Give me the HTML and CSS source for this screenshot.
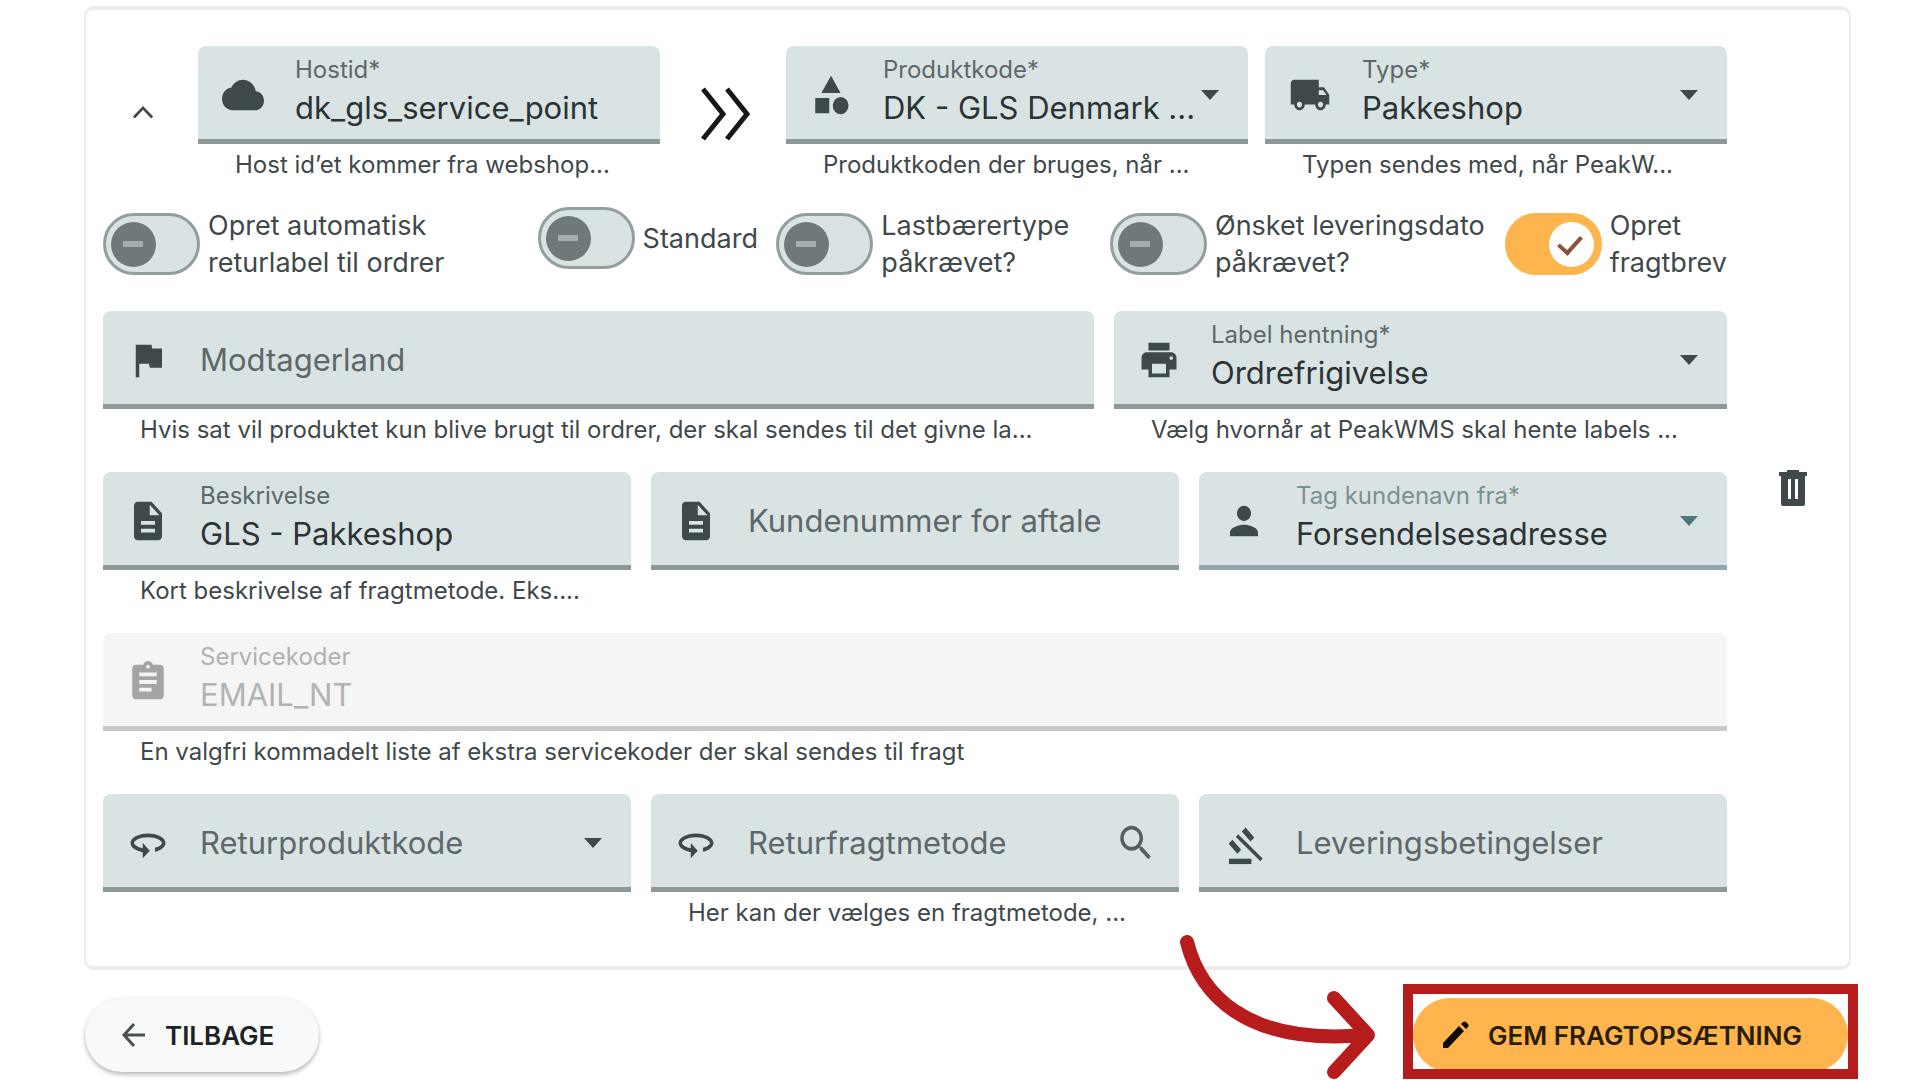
FILE: index.html
```html
<!DOCTYPE html>
<html lang="da">
<head>
<meta charset="utf-8">
<meta name="viewport" content="width=device-width, initial-scale=1">
<title>Fragtopsætning</title>
<link rel="stylesheet" href="styles.css">
</head>
<body>
<svg class="sprite" aria-hidden="true">
  <symbol id="i-cloud" viewBox="0 0 24 24" preserveAspectRatio="none"><path d="M19.35 10.04C18.67 6.59 15.64 4 12 4 9.11 4 6.6 5.64 5.35 8.04 2.34 8.36 0 10.91 0 14c0 3.31 2.69 6 6 6h13c2.76 0 5-2.24 5-5 0-2.64-2.05-4.78-4.65-4.96z"/></symbol>
  <symbol id="i-category" viewBox="0 0 24 24" preserveAspectRatio="none"><path d="M12 2l-5.500 9h11zM3 13.500h8v8H3z"/><circle cx="17.500" cy="17.500" r="4.500"/></symbol>
  <symbol id="i-truck" viewBox="0 0 24 24" preserveAspectRatio="none"><path d="M20 8h-3V4H3c-1.100 0-2 .9-2 2v11h2c0 1.660 1.340 3 3 3s3-1.340 3-3h6c0 1.660 1.340 3 3 3s3-1.340 3-3h2v-5l-3-4zM6 18.500c-.83 0-1.500-.67-1.500-1.500s.67-1.500 1.500-1.500 1.500.67 1.500 1.500-.67 1.500-1.500 1.500zm13.500-9l1.960 2.500H17V9.500h2.500zm-1.500 9c-.83 0-1.500-.67-1.500-1.500s.67-1.500 1.500-1.500 1.500.67 1.500 1.500-.67 1.500-1.500 1.500z"/></symbol>
  <symbol id="i-flag" viewBox="0 0 24 24" preserveAspectRatio="none"><path d="M14.400 6L14 4H5v17h2v-7h5.600l.4 2h7V6z"/></symbol>
  <symbol id="i-print" viewBox="0 0 24 24" preserveAspectRatio="none"><path d="M19 8H5c-1.660 0-3 1.340-3 3v6h4v4h12v-4h4v-6c0-1.660-1.340-3-3-3zm-3 11H8v-5h8v5zm3-7c-.55 0-1-.45-1-1s.45-1 1-1 1 .45 1 1-.45 1-1 1zm-1-9H6v4h12V3z"/></symbol>
  <symbol id="i-doc" viewBox="0 0 24 24" preserveAspectRatio="none"><path d="M14 2H6c-1.100 0-1.990.9-1.990 2L4 20c0 1.100.89 2 1.990 2H18c1.100 0 2-.9 2-2V8l-6-6zm2 16H8v-2h8v2zm0-4H8v-2h8v2zm-3-5V3.500L18.500 9H13z"/></symbol>
  <symbol id="i-person" viewBox="0 0 24 24" preserveAspectRatio="none"><path d="M12 12c2.210 0 4-1.790 4-4s-1.790-4-4-4-4 1.790-4 4 1.790 4 4 4zm0 2c-2.670 0-8 1.340-8 4v2h16v-2c0-2.660-5.330-4-8-4z"/></symbol>
  <symbol id="i-assignment" viewBox="0 0 24 24" preserveAspectRatio="none"><path d="M19 3h-4.180C14.400 1.840 13.300 1 12 1c-1.300 0-2.400.84-2.820 2H5c-1.100 0-2 .9-2 2v14c0 1.100.9 2 2 2h14c1.100 0 2-.9 2-2V5c0-1.100-.9-2-2-2zm-7 0c.55 0 1 .45 1 1s-.45 1-1 1-1-.45-1-1 .45-1 1-1zm2 14H7v-2h7v2zm3-4H7v-2h10v2zm0-4H7V7h10v2z"/></symbol>
  <symbol id="i-return" viewBox="0 0 24 24" preserveAspectRatio="none"><path d="M12 7C6.480 7 2 9.240 2 12c0 2.240 2.940 4.130 7 4.770V20l4-4-4-4v2.730c-3.150-.56-5-1.900-5-2.730 0-1.060 3.040-3 8-3s8 1.940 8 3c0 .73-1.460 1.890-4 2.530v2.050c3.530-.77 6-2.530 6-4.580 0-2.760-4.480-5-10-5z"/></symbol>
  <symbol id="i-search" viewBox="0 0 24 24" preserveAspectRatio="none"><path d="M15.500 14h-.79l-.28-.27C15.410 12.590 16 11.110 16 9.500 16 5.910 13.090 3 9.500 3S3 5.910 3 9.500 5.910 16 9.500 16c1.610 0 3.090-.59 4.230-1.570l.27.28v.79l5 4.990L20.490 19l-4.990-5zm-6 0C7.010 14 5 11.990 5 9.500S7.010 5 9.500 5 14 7.010 14 9.500 11.990 14 9.500 14z"/></symbol>
  <symbol id="i-gavel" viewBox="0 0 24 24" preserveAspectRatio="none"><path d="M3.400 20.200h12.800v2.800H3.400z"/><path fill="none" stroke="currentColor" stroke-width="3" d="M11.800 5l5 5.200M4.300 11.400l5 5.200"/><path fill="none" stroke="currentColor" stroke-width="1.900" d="M8 8.200l14 12.600"/></symbol>
  <symbol id="i-caret" viewBox="0 0 20 12" preserveAspectRatio="none"><path d="M1 1h18l-9 10z"/></symbol>
</svg>

<main>
<form class="page">
  <section class="card">
    <div class="rows">

      <div class="row row-host">
        <button type="button" class="collapse" aria-label="Skjul"><svg width="22" height="15" viewBox="0 0 24 16"><path d="M2 13.500L12 3l10 10.500"/></svg></button>
        <div class="cell">
          <div class="field">
            <svg class="icon"><use href="#i-cloud"/></svg>
            <label class="label" for="hostid">Hostid*</label>
            <input class="value" id="hostid" type="text" value="dk_gls_service_point">
          </div>
          <p class="hint">Host id’et kommer fra webshop...</p>
        </div>
        <svg class="arrows" width="50" height="56" viewBox="0 0 50 56"><path d="M3 3l20 25L3 53M27 3l20 25-20 25"/></svg>
        <div class="cell">
          <div class="field">
            <svg class="icon"><use href="#i-category"/></svg>
            <label class="label" for="produktkode">Produktkode*</label>
            <select class="value" id="produktkode"><option>DK - GLS Denmark ...</option></select>
            <svg class="caret"><use href="#i-caret"/></svg>
          </div>
          <p class="hint">Produktkoden der bruges, når ...</p>
        </div>
        <div class="cell cell-last">
          <div class="field">
            <svg class="icon"><use href="#i-truck"/></svg>
            <label class="label" for="type">Type*</label>
            <select class="value" id="type"><option>Pakkeshop</option></select>
            <svg class="caret"><use href="#i-caret"/></svg>
          </div>
          <p class="hint">Typen sendes med, når PeakW...</p>
        </div>
      </div>

      <div class="row row-toggles">
        <label class="toggle"><input type="checkbox" class="switch"><span>Opret automatisk<br>returlabel til ordrer</span></label>
        <label class="toggle"><input type="checkbox" class="switch"><span>Standard</span></label>
        <label class="toggle"><input type="checkbox" class="switch"><span>Lastbærertype<br>påkrævet?</span></label>
        <label class="toggle"><input type="checkbox" class="switch"><span>Ønsket leveringsdato<br>påkrævet?</span></label>
        <label class="toggle"><input type="checkbox" class="switch" checked><span>Opret<br>fragtbrev</span></label>
      </div>

      <div class="row row-country">
        <div class="cell">
          <div class="field empty">
            <svg class="icon"><use href="#i-flag"/></svg>
            <label class="label" for="land">Modtagerland</label>
            <input class="value" id="land" type="text">
          </div>
          <p class="hint">Hvis sat vil produktet kun blive brugt til ordrer, der skal sendes til det givne la...</p>
        </div>
        <div class="cell">
          <div class="field">
            <svg class="icon"><use href="#i-print"/></svg>
            <label class="label" for="hentning">Label hentning*</label>
            <select class="value" id="hentning"><option>Ordrefrigivelse</option></select>
            <svg class="caret"><use href="#i-caret"/></svg>
          </div>
          <p class="hint">Vælg hvornår at PeakWMS skal hente labels ...</p>
        </div>
      </div>

      <div class="row row-thirds">
        <div class="cell">
          <div class="field">
            <svg class="icon"><use href="#i-doc"/></svg>
            <label class="label" for="beskrivelse">Beskrivelse</label>
            <input class="value" id="beskrivelse" type="text" value="GLS - Pakkeshop">
          </div>
          <p class="hint">Kort beskrivelse af fragtmetode. Eks....</p>
        </div>
        <div class="cell">
          <div class="field empty">
            <svg class="icon"><use href="#i-doc"/></svg>
            <label class="label" for="kundenummer">Kundenummer for aftale</label>
            <input class="value" id="kundenummer" type="text">
          </div>
        </div>
        <div class="cell">
          <div class="field active">
            <svg class="icon"><use href="#i-person"/></svg>
            <label class="label" for="kundenavn">Tag kundenavn fra*</label>
            <select class="value" id="kundenavn"><option>Forsendelsesadresse</option></select>
            <svg class="caret"><use href="#i-caret"/></svg>
          </div>
        </div>
      </div>

      <div class="row">
        <div class="cell">
          <div class="field disabled">
            <svg class="icon"><use href="#i-assignment"/></svg>
            <label class="label" for="servicekoder">Servicekoder</label>
            <input class="value" id="servicekoder" type="text" value="EMAIL_NT" disabled>
          </div>
          <p class="hint">En valgfri kommadelt liste af ekstra servicekoder der skal sendes til fragt</p>
        </div>
      </div>

      <div class="row row-thirds">
        <div class="cell">
          <div class="field empty">
            <svg class="icon"><use href="#i-return"/></svg>
            <label class="label" for="returkode">Returproduktkode</label>
            <select class="value" id="returkode"><option></option></select>
            <svg class="caret"><use href="#i-caret"/></svg>
          </div>
        </div>
        <div class="cell">
          <div class="field empty has-search">
            <svg class="icon"><use href="#i-return"/></svg>
            <label class="label" for="returmetode">Returfragtmetode</label>
            <input class="value" id="returmetode" type="text">
            <svg class="icon search"><use href="#i-search"/></svg>
          </div>
          <p class="hint">Her kan der vælges en fragtmetode, ...</p>
        </div>
        <div class="cell">
          <div class="field empty">
            <svg class="icon"><use href="#i-gavel"/></svg>
            <label class="label" for="betingelser">Leveringsbetingelser</label>
            <input class="value" id="betingelser" type="text">
          </div>
        </div>
      </div>
    </div>

    <button type="button" class="delete" aria-label="Slet">
      <svg width="28" height="36" viewBox="0 0 28 36"><path fill-rule="evenodd" d="M8 0h12v2h8v4h-2v28q0 2-2 2H4q-2 0-2-2V6H0V2h8zM9 9v20h3V9zM16 9v20h3V9z"/></svg>
    </button>
  </section>

  <footer class="actions">
    <button type="button" class="btn back">
      <svg width="24" height="24" viewBox="0 0 24 24"><path fill="none" stroke="currentColor" stroke-width="3" d="M12 1L2 12l10 11M2 12h21"/></svg>
      TILBAGE
    </button>
    <div class="highlight">
      <button type="submit" class="btn save">
        <svg width="28" height="28" viewBox="0 0 28 28"><path d="M1 27v-5L17 5l5 5L6 27zM19 3l2-2q1.500-1 3 0l2 2q1.500 1.500 0 3l-2 2z"/></svg>
        GEM FRAGTOPSÆTNING
      </button>
      <svg class="pointer" width="200" height="146" viewBox="0 0 200 146" aria-hidden="true"><path d="M10 9C22 57 64 113 188 102M157 65l34 37-34 37"/></svg>
    </div>
  </footer>
</form>
</main>
</body>
</html>
```
FILE: styles.css
```css
* { box-sizing: border-box; }

body {
  margin: 0;
  background: #fff;
  color: #3f484a;
  font-family: Inter, "Liberation Sans", sans-serif;
}

button, input, select {
  font: inherit;
  color: inherit;
  margin: 0;
  padding: 0;
  border: 0;
  background: none;
}

button { cursor: pointer; }

svg { display: block; fill: currentColor; }

.sprite { width: 0; height: 0; position: absolute; }

.page { padding: 6px 69px 8px 84px; }

/* Card */
.card {
  display: grid;
  grid-template-columns: minmax(0, 1fr) 122px;
  border: solid #ececec;
  border-width: 4px 2px;
  border-radius: 10px;
  padding: 36px 0 31px 17px;
}

.rows { display: grid; gap: 20px; }

.row { display: grid; gap: 20px; }

.row-host {
  grid-template-columns: 95px minmax(0, 1fr) 126px minmax(0, 1fr) 17px minmax(0, 1fr);
  gap: 0;
}

.cell-last { grid-column: 6; }

.row-country { grid-template-columns: minmax(0, 991fr) minmax(0, 613fr); }

.row-thirds { grid-template-columns: repeat(3, minmax(0, 1fr)); }

.row-toggles {
  grid-template-columns: 435fr 239fr 334fr 395fr 221fr;
  gap: 0;
  align-items: start;
  padding-bottom: 10px;
}

.collapse, .arrows { place-self: center; }

.collapse { padding: 0 16px 8px 0; }

.collapse path, .arrows path { fill: none; stroke: currentColor; stroke-width: 3; }

.arrows { color: #15181a; margin: 0 0 6px 4px; }

.arrows path { stroke-width: 5; }

/* Filled form fields */
.cell { min-height: 141px; }

.field {
  display: grid;
  grid-template-columns: 42px minmax(0, 1fr) auto;
  grid-template-rows: 26px 50px;
  column-gap: 31px;
  align-content: start;
  height: 98px;
  padding: 11px 28px 0 24px;
  background: #d9e3e3;
  border-bottom: 5px solid #8d9999;
  border-radius: 8px 8px 0 0;
}

.has-search { padding-right: 22px; }

.icon { width: 42px; height: 46px; grid-area: 1 / 1 / 3 / 2; align-self: center; }

.caret {
  width: 20px;
  height: 12px;
  grid-area: 1 / 3 / 3 / 4;
  align-self: center;
  pointer-events: none;
}

.search { grid-area: 1 / 3 / 3 / 4; color: #566062; }

.label {
  grid-area: 1 / 2;
  font-size: 24px;
  line-height: 26px;
  color: #5e686a;
  white-space: nowrap;
}

.value {
  grid-area: 2 / 2 / 3 / 4;
  align-self: center;
  width: 100%;
  font-size: 31px;
  line-height: 40px;
  height: 40px;
  color: #2c3335;
  appearance: none;
  outline: 0;
}

.empty .label { grid-area: 1 / 2 / 3 / 3; font-size: 31px; line-height: 40px; align-self: center; }

.empty .value { grid-area: 1 / 2 / 3 / 4; height: 72px; }

.active { border-bottom-color: #91a9a9; }
.active .label { color: #7a9192; }
.active .caret { color: #4f7677; }

.disabled { background: #f5f5f5; border-bottom-color: #c9c9c9; color: #a3a4a4; }
.disabled .label { color: #b0b1b1; }
.disabled .value { color: #b2b3b4; }

.hint {
  margin: 0;
  padding: 5px 37px 0;
  font-size: 24px;
  line-height: 32px;
  white-space: nowrap;
}

/* Switches */
.toggle {
  display: flex;
  align-items: center;
  gap: 8px;
  font-size: 27px;
  line-height: 37px;
  white-space: nowrap;
}

.switch {
  appearance: none;
  flex: none;
  display: grid;
  align-items: center;
  justify-items: start;
  width: 97px;
  height: 62px;
  padding: 0 5px;
  border: 3px solid #939e9e;
  border-radius: 31px;
  background: #d9e3e3;
}

.switch::before, .switch::after { content: ""; grid-area: 1 / 1; }

.switch::before { width: 45px; height: 45px; border-radius: 50%; background: #6f7979; }

.switch::after { width: 20px; height: 6px; margin-left: 12px; background: #a3adad; }

.switch:checked { justify-items: end; border-color: #ffb54d; background: #ffb54d; }

.switch:checked::before { background: #fff; }

.switch:checked::after {
  width: 10px;
  height: 19px;
  margin: 0 17px 4px 0;
  background: none;
  border: solid #8c5138;
  border-width: 0 4px 4px 0;
  transform: rotate(42deg);
}

.delete { place-self: center; padding: 0 0 6px 10px; }

/* Footer */
.actions { display: flex; justify-content: space-between; padding: 28px 3px 0 1px; }

.btn {
  display: flex;
  align-items: center;
  height: 74px;
  border-radius: 37px;
  font-size: 26px;
  font-weight: 600;
  color: #1d2224;
  white-space: nowrap;
}

.back {
  gap: 19px;
  padding: 0 45px 0 37px;
  background: #f7faf9;
  box-shadow: 0 3px 4px rgba(0, 0, 0, .24), 0 0 3px rgba(0, 0, 0, .08);
}

.back svg { color: #4a5052; }

.save { gap: 18px; padding: 0 46px 0 29px; background: #ffb54d; color: #2a1d00; }

.save svg { color: #0c0a05; }

.highlight { position: relative; }

.highlight::after {
  content: "";
  position: absolute;
  inset: -14px -10px -7px -10px;
  border: 10px solid #b71c1c;
  pointer-events: none;
}

.pointer {
  position: absolute;
  right: calc(100% + 36px);
  bottom: -7px;
  fill: none;
  stroke: #b71c1c;
  stroke-width: 14;
  stroke-linecap: round;
  stroke-linejoin: round;
  pointer-events: none;
}
```
